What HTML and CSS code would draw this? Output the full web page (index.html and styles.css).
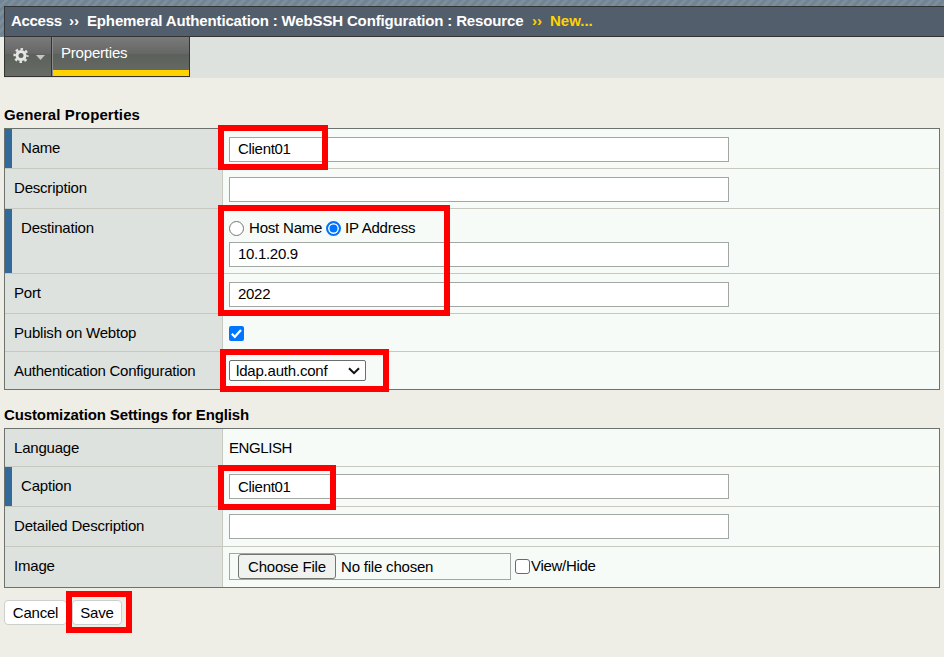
FILE: index.html
```html
<!DOCTYPE html>
<html lang="en">
<head>
<meta charset="utf-8">
<title>WebSSH Configuration Resource</title>
<link rel="stylesheet" href="styles.css">
</head>
<body>
<div class="top">
  <header class="crumbs"><span class="c1">Access</span><span class="sep">››</span><span class="c2">Ephemeral Authentication : WebSSH Configuration : Resource</span><span class="sep now">››</span><span class="c3 now">New...</span></header>
</div>
<nav class="tabs">
  <div class="gear">
    <svg width="36" height="20" viewBox="0 0 36 20">
      <g fill="none" stroke="#e4e6e4">
        <circle cx="9" cy="9.5" r="4" stroke-width="3"/>
        <circle cx="9" cy="9.5" r="6.4" stroke-width="2.4" stroke-dasharray="2.5 2.526" stroke-dashoffset="1.25"/>
      </g>
      <path d="M24 9h9l-4.500 5z" fill="#c3c6c3"/>
    </svg>
  </div>
  <div class="tab"><span>Properties</span></div>
</nav>
<main>
  <h2 class="h-general">General Properties</h2>
  <section class="table">
    <div class="row req"><div class="label">Name</div><div class="value"><input class="text" value="Client01"></div></div>
    <div class="row"><div class="label">Description</div><div class="value"><input class="text"></div></div>
    <div class="row req tall"><div class="label">Destination</div><div class="value">
      <div class="radios"><i class="radio"></i><span class="host">Host Name</span><i class="radio on"></i><span>IP Address</span></div>
      <input class="text" value="10.1.20.9"></div></div>
    <div class="row"><div class="label">Port</div><div class="value"><input class="text" value="2022"></div></div>
    <div class="row short"><div class="label">Publish on Webtop</div><div class="value"><svg class="check" width="15" height="15" viewBox="0 0 15 15"><rect width="15" height="15" rx="2" fill="#0075ff"/><path d="M2.800 7.800l3 3L12 3.900" fill="none" stroke="#fff" stroke-width="2.200"/></svg></div></div>
    <div class="row short last"><div class="label auth">Authentication Configuration</div><div class="value"><div class="select"><span>ldap.auth.conf</span><svg width="12" height="8" viewBox="0 0 12 8"><path d="M1 1.200l5 5 5-5" fill="none" stroke="#111" stroke-width="2"/></svg></div></div></div>
  </section>
  <h2 class="h-custom">Customization Settings for English</h2>
  <section class="table">
    <div class="row short"><div class="label">Language</div><div class="value plain">ENGLISH</div></div>
    <div class="row req"><div class="label">Caption</div><div class="value"><input class="text cap" value="Client01"></div></div>
    <div class="row"><div class="label">Detailed Description</div><div class="value"><input class="text cap"></div></div>
    <div class="row image last"><div class="label">Image</div><div class="value files"><div class="file"><span class="choose">Choose File</span><span class="none">No file chosen</span></div><i class="box"></i><span class="view">View/Hide</span></div></div>
  </section>
  <div class="actions"><button class="cancel">Cancel</button><button class="save">Save</button></div>
</main>
<div class="mark m-name"></div>
<div class="mark m-dest"></div>
<div class="mark m-auth"></div>
<div class="mark m-cap"></div>
<div class="mark m-save"></div>
</body>
</html>
```
FILE: styles.css
```css
* { box-sizing: border-box; }
body { margin: 0; width: 944px; height: 657px; overflow: hidden; background: #efeee6; color: #000; font: 15px/18px "Liberation Sans", Arial, sans-serif; letter-spacing: -.2px; }
.top { height: 37px; padding: 6px 0 0 4px; background: repeating-linear-gradient(135deg, #6f8494 0 3px, #7b8e99 3px 6px); }
.crumbs { display: flex; height: 31px; padding: 0 0 1px 6px; align-items: center; border: solid #333; border-width: 1px 0 1px 1px; background: #525e6c; color: #fff; font-weight: bold; white-space: pre; }
.c1 { width: 50px; letter-spacing: -.3px; }
.c2 { width: 437px; letter-spacing: -.15px; }
.c3 { letter-spacing: 0; }
.sep { width: 10px; margin: 0 8px; letter-spacing: 0; }
.now { color: #ffd200; }
.tabs { display: flex; height: 41px; margin-left: 4px; background: #dde2de; }
.gear { width: 48px; height: 40px; padding: 9px 0 0 7px; border: solid #333; border-width: 0 1px 1px; background: linear-gradient(#7a7a7a, #666 43%, #5b605b 44%, #676c67); }
.tab { width: 138px; height: 40px; border: solid #333; border-width: 0 1px 1px 0; box-shadow: inset 1px 0 #8b8b8b, inset 0 -6px #ffd200; background: linear-gradient(#7a7a7a, #666 43%, #5b605b 44%, #676c67); color: #fff; padding: 7px 0 0 9px; }
main { padding-left: 4px; }
h2 { margin: 0; font-size: 15px; line-height: 18px; }
.h-general { padding-top: 28px; height: 50px; letter-spacing: .1px; }
.h-custom { padding-top: 16px; height: 38px; letter-spacing: -.12px; }
.table { width: 936px; border: 1px solid #6c736e; background: #f6fbf7; }
.row { display: flex; height: 40px; border-bottom: 1px solid #c7c8bf; }
.label { width: 218px; padding: 10px 0 0 9px; border-right: 1px solid #c7c8bf; background: #dde2de; white-space: nowrap; }
.req .label { border-left: 7px solid #326a9c; }
.auth { letter-spacing: -.25px; }
.value { flex: 1; padding: 8px 0 0 6px; }
.tall { height: 65px; }
.short { height: 38px; }
.image { height: 41px; }
.last { border-bottom: 0; }
.row.short.last { height: 37px; }
.row.image.last { height: 40px; }
.text { display: block; width: 500px; height: 25px; margin: 0; padding: 0 8px 2px; border: 1px solid #a2a7a3; background: #fff; font: inherit; letter-spacing: -.3px; color: #000; }
.cap { margin-top: -1px; padding-bottom: 1px; }
.radios { display: flex; height: 25px; margin: 0; align-items: flex-start; padding-top: 2px; white-space: nowrap; }
.radios span { margin-left: 5px; }
.radios .host { width: 73px; }
.radios span:last-child { margin-left: 4px; }
.tall .value { padding-top: 8px; }
.radio { flex: none; width: 15px; height: 15px; margin-top: 2px; border: 1px solid #767676; border-radius: 50%; background: #fff; }
.on { margin-left: 4px; border: 2px solid #0075ff; background: #0075ff; box-shadow: inset 0 0 0 1.500px #fff; }
.check { display: block; margin-top: 4px; }
.select { display: flex; width: 137px; height: 21px; padding: 0 5px 0 6px; align-items: center; justify-content: space-between; border: 1px solid #6b6f6b; border-radius: 2px; background: #fff; }
.value.plain { padding-top: 10px; letter-spacing: -.4px; }
.value.files { display: flex; padding-top: 6px; }
.file { display: flex; width: 282px; height: 27px; padding-left: 8px; border: 1px solid #a2a7a3; align-items: center; }
.choose { width: 98px; height: 25px; border: 1px solid #707570; border-radius: 3px; background: #f0f2ef; line-height: 24px; padding-left: 9px; white-space: nowrap; }
.none { margin-left: 5px; }
.box { width: 15px; height: 15px; margin: 6px 0 0 4px; border: 1px solid #686c68; border-radius: 3px; background: #fff; }
.view { margin: 4px 0 0 1px; letter-spacing: -.3px; }
.actions { display: flex; gap: 5px; margin-top: 12px; }
button { height: 25px; padding: 0; border: 1px solid #ccd0cd; border-radius: 4px; background: #fff; color: #000; font: inherit; letter-spacing: inherit; }
.cancel { width: 63px; }
.save { width: 50px; }
.mark { position: absolute; border: 6px solid #f00; pointer-events: none; }
.m-name { left: 218px; top: 125px; width: 110px; height: 45px; }
.m-dest { left: 218px; top: 205px; width: 232px; height: 111px; }
.m-auth { left: 220px; top: 349px; width: 169px; height: 43px; }
.m-cap { left: 218px; top: 465px; width: 118px; height: 45px; }
.m-save { left: 66px; top: 591px; width: 66px; height: 42px; }
```
